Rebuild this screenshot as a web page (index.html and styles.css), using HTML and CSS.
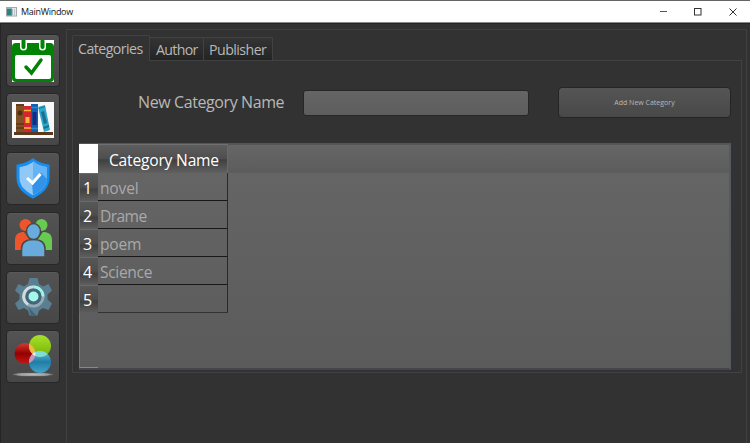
FILE: index.html
```html
<!DOCTYPE html>
<html lang="en">
<head>
<meta charset="utf-8">
<title>MainWindow</title>
<link rel="stylesheet" href="styles.css">
</head>
<body>
<header class="titlebar">
  <svg class="app-icon" width="11" height="10" viewBox="0 0 11 10"><rect x=".5" y=".5" width="10" height="8.5" fill="#e6e9ec" stroke="#a4a8ab"/><rect x="1" y="1.5" width="5" height="7" fill="#2f8279"/><rect x="5" y="2" width="1.5" height="6" fill="#5f8bae"/><path d="M8.5 2v6" stroke="#c4c8cc"/></svg>
  <span class="title">MainWindow</span>
  <svg class="controls" width="78" height="10" viewBox="0 0 78 10" fill="none" stroke="#333"><path d="M0 4.500h7" stroke="#555"/><rect x="34.500" y="1.500" width="6.500" height="6.500"/><path d="M69.500 1.500l7 7m0-7l-7 7"/></svg>
</header>
<main class="window">
  <nav class="sidebar">
    <button class="tool"><svg width="42" height="42" viewBox="0 0 42 42"><path fill="#fff" d="M0 0h42v42H0z"/><rect y="3" width="42" height="39" rx="4" fill="#008305"/><rect x="3" y="15" width="36" height="24" rx="2" fill="#fff"/><path d="M11.500 0v7M30.500 0v7" stroke="#fff" stroke-width="7" stroke-linecap="round"/><path d="M11.500 1v6M30.500 1v6" stroke="#008305" stroke-width="4" stroke-linecap="round"/><path d="M14 27l5.500 6L29 20" fill="none" stroke="#008305" stroke-width="3.500" stroke-linecap="round"/></svg></button>
    <button class="tool"><svg width="42" height="42" viewBox="0 0 42 42"><path fill="#f8f8f8" d="M0 3h42v36H0z"/><path fill="#5b391a" d="M2 33h39v3H2z"/><path fill="#805026" d="M4 5h8v28H4z"/><path d="M4 6h8M4 25h8M4 29h8" stroke="#593718" stroke-width="1.500"/><circle cx="8" cy="14" r="2.500" fill="#4e2d12"/><path fill="#d62430" d="M12 7h7v26h-7z"/><path d="M12 11.500h7M12 29h7" stroke="#f3bb35" stroke-width="1.500"/><path fill="#f3bb35" d="M13.500 18h4v6h-4z"/><path fill="#1260b5" d="M19 5h7v28h-7z"/><path d="M19 8.500h7M19 29.500h7" stroke="#2f86cf" stroke-width="1.500"/><path fill="#132c80" d="M20.500 13h4v13h-4z"/><path fill="#2ba8cb" d="M26 8l7-2 5 25-6 2z"/><path fill="#1c6f8d" d="M29 13l3-1 3 12-3 1zM27 9l6-2v1l-6 2zM31 28l6-2v2l-5 2z"/></svg></button>
    <button class="tool"><svg width="42" height="42" viewBox="0 0 42 42"><path d="M21 2c5 4 9 5 15 6v12c0 9-6 14-15 19C12 34 6 29 6 20V8c6-1 10-2 15-6z" fill="#90c8f7" stroke="#168df0" stroke-width="3"/><path d="M21 3c5 4 9 5 14 6v11c0 8-5 13-14 17z" fill="#64b3f5"/><path d="M20 25l9-10 6 6c-1 8-6 12-14 16z" fill="#3293e8"/><path d="M15 20l5.500 5 8-9" fill="none" stroke="#fff" stroke-width="3"/></svg></button>
    <button class="tool"><svg width="42" height="42" viewBox="0 0 42 42"><g fill="#ef552b"><circle cx="13.500" cy="8" r="6"/><path d="M3 33V23c0-6 4-8 9-8l6 8-6 10z"/></g><g fill="#69ca52"><circle cx="29.500" cy="8" r="6"/><path d="M40 33V23c0-6-4-8-9-8l-6 8 6 10z"/></g><g fill="#68abdd" stroke="#4b4946" stroke-width="1.500"><path d="M9.500 40V32c0-7 5-9.500 12-9.500s11.500 2.500 11.500 9.500v8z"/><ellipse cx="21.500" cy="14.500" rx="7" ry="8"/></g></svg></button>
    <button class="tool"><svg width="42" height="42" viewBox="0 0 42 42"><path d="M17.500 2h8l1.500 6 4 2.500 5.500-2.500 3.500 6.500-4.500 4v5l4.500 4-3.500 6.500-5.500-2-4 2.500-1.500 5h-8L16 34.500 12 32l-5.500 2L3 27.500l4.500-4v-5L3 14.500 6.500 8l5.500 2.500L16 8z" fill="#5b7f92"/><circle cx="21.500" cy="20.500" r="11" fill="#67899b"/><circle cx="21.500" cy="20.500" r="9.500" fill="none" stroke="#95aab5" stroke-width="3"/><path d="M16 28.500a9.500 9.500 0 0 1 5.500-17.500" fill="none" stroke="#d1dadd" stroke-width="3"/><path d="M21.500 11a9.500 9.500 0 0 1 9.500 9.500" fill="none" stroke="#9df4e6" stroke-width="3"/><circle cx="21.500" cy="20.500" r="6.500" fill="#a4f8e9" stroke="#426579" stroke-width="3"/><path d="M17 32l7 7h-5l-2-6z" fill="#426579"/></svg></button>
    <button class="tool"><svg width="42" height="42" viewBox="0 0 42 42"><defs><linearGradient id="red" x2="0" y2="1"><stop stop-color="#d13c32"/><stop offset=".5" stop-color="#940000"/><stop offset="1" stop-color="#c01a15"/></linearGradient><linearGradient id="green" x2="0" y2="1"><stop stop-color="#a9df2d"/><stop offset="1" stop-color="#72b400"/></linearGradient><linearGradient id="blue" x2="0" y2="1"><stop stop-color="#67bfd1"/><stop offset=".5" stop-color="#217da8"/><stop offset="1" stop-color="#43a3c7"/></linearGradient><radialGradient id="floor"><stop stop-color="#bbb"/><stop offset=".75" stop-color="#999"/><stop offset="1" stop-color="#5c5c5c"/></radialGradient><clipPath id="rc"><circle cx="13" cy="18.500" r="10.500"/></clipPath><clipPath id="gc"><circle cx="28" cy="11" r="11"/></clipPath></defs><ellipse cx="21" cy="39.500" rx="20.500" ry="2" fill="url(#floor)"/><circle cx="13" cy="18.500" r="10.500" fill="url(#red)"/><circle cx="28" cy="11" r="11" fill="url(#green)"/><circle cx="28" cy="27" r="11" fill="url(#blue)"/><circle cx="28" cy="11" r="11" fill="#efb943" clip-path="url(#rc)"/><circle cx="28" cy="27" r="11" fill="#c994bb" clip-path="url(#rc)"/><circle cx="28" cy="27" r="11" fill="#7dded6" clip-path="url(#gc)"/><g clip-path="url(#rc)"><circle cx="28" cy="27" r="11" fill="#f0eee5" clip-path="url(#gc)"/></g></svg></button>
  </nav>
  <section class="frame">
    <div class="tabs"><div class="tab active"><span>Categories</span></div><div class="tab author"><span>Author</span></div><div class="tab publisher"><span>Publisher</span></div></div>
    <div class="pane">
      <form class="entry">
        <label for="category">New Category Name</label>
        <input id="category" type="text">
        <button class="add" type="button"><span>Add New Category</span></button>
      </form>
      <div class="table">
        <div class="head"><div class="corner"></div><div class="column">Category Name</div><div class="head-rest"></div></div>
        <div class="row"><div class="num">1</div><div class="cell novel">novel</div></div>
        <div class="row"><div class="num">2</div><div class="cell drame">Drame</div></div>
        <div class="row"><div class="num">3</div><div class="cell poem">poem</div></div>
        <div class="row"><div class="num">4</div><div class="cell science">Science</div></div>
        <div class="row"><div class="num">5</div><div class="cell last"></div></div>
        <div class="gutter"></div>
      </div>
    </div>
  </section>
</main>
</body>
</html>
```
FILE: styles.css
```css
* { box-sizing: border-box; }
body { margin: 0; width: 750px; height: 443px; overflow: hidden; background: #323232; color: #b8b8b8; font-family: "Open Sans", "Noto Sans", sans-serif; font-size: 16px; }
button, input { margin: 0; padding: 0; font: inherit; }
.titlebar { display: flex; align-items: center; height: 23px; padding: 0 12px 0 6px; background: #fff; border-top: 1px solid #656565; border-bottom: 1px solid #888; }
.title { margin-left: 4px; font-size: 9px; line-height: 20px; color: #111; letter-spacing: -.3px; }
.controls { margin-left: auto; }
.window { display: flex; height: 420px; border-left: 1px solid #252525; border-top: 1px solid #252525; }
.sidebar { display: flex; flex-direction: column; gap: 6.2px; width: 65px; padding: 10px 0 0 5px; }
.tool { display: flex; align-items: center; justify-content: center; flex: none; width: 54px; height: 53px; border: 1px solid #272727; border-radius: 4px; background: linear-gradient(#535353, #474747); box-shadow: inset 0 1px #595959; }
.frame { width: 681px; height: 430px; margin-top: 5px; padding: 5px 0 0 5px; border: 1px solid #404040; }
.tabs { display: flex; align-items: flex-end; height: 25px; width: 201px; }
.tab { height: 23px; border: 1px solid #414141; border-bottom: 0; line-height: 23px; font-size: 14.2px; letter-spacing: -.55px; background: linear-gradient(#343434, #242424); white-space: nowrap; }
.tab.active { position: relative; z-index: 1; height: 26px; width: 78px; margin-bottom: -1px; padding-left: 5px; line-height: 26px; background: #323232; border-radius: 2px 2px 0 0; }
.author { width: 54px; border-left: 0; padding-left: 6px; letter-spacing: -.7px; }
.publisher { width: 69px; border-left: 0; padding-left: 5px; }
.pane { width: 670px; height: 313px; border: 1px solid #414141; padding: 26px 10px 0 6px; }
.entry { display: flex; height: 56px; margin: 0; }
.entry label { width: 225px; padding-left: 59px; line-height: 31px; letter-spacing: -.4px; white-space: nowrap; }
.entry input { width: 226px; height: 26px; margin-top: 3px; margin-left: -1px; border: 1px solid #272727; border-radius: 3px; background: linear-gradient(#656565, #5d5d5d); }
.add { width: 173px; height: 31px; margin-left: 29px; border: 1px solid #252525; border-radius: 4px; background: linear-gradient(#555, #484848); color: #b8b8b8; font-size: 7px; }
.table { display: flex; flex-direction: column; width: 652px; height: 227px; border: 1px solid #545454; border-right: 2px solid #555962; border-bottom: 2px solid #45464b; background: linear-gradient(#666, #5b5b5b); }
.head { display: flex; flex: none; height: 29px; }
.corner { width: 19px; margin-left: -1px; background: #fff; }
.column { width: 130px; padding-left: 11px; border-top: 1px solid #707070; border-right: 1px solid #696969; line-height: 30px; font-size: 15.6px; letter-spacing: -.2px; color: #fff; background: linear-gradient(#5d5d5d, #4f4f4f 48%, #404040 53%, #616161); white-space: nowrap; }
.head-rest { flex: 1; border-top: 1px solid #555; background: linear-gradient(#666, #5c5c5c); }
.row { display: flex; flex: none; width: 149px; height: 28px; margin-left: -1px; }
.num { width: 19px; padding-left: 4px; border-left: 1px solid #6a6a6a; border-top: 1px solid #6a6a6a; padding-left: 3px; line-height: 28px; color: #fff; background: linear-gradient(#575757, #4d4d4d 48%, #404040 58%, #5e5e5e); }
.cell { width: 130px; border-bottom: 1px solid #181818; border-right: 1px solid #292929; padding-left: 2px; line-height: 30px; color: #a9a9a9; font-size: 15.6px; letter-spacing: -.35px; }
.novel, .poem { letter-spacing: -.2px; }
.drame { letter-spacing: -.6px; }
.cell.last { border-bottom-color: #333; }
.gutter { width: 19px; flex: 1; margin-left: -1px; border-left: 1px solid #737373; border-bottom: 1px solid #888; }
```
